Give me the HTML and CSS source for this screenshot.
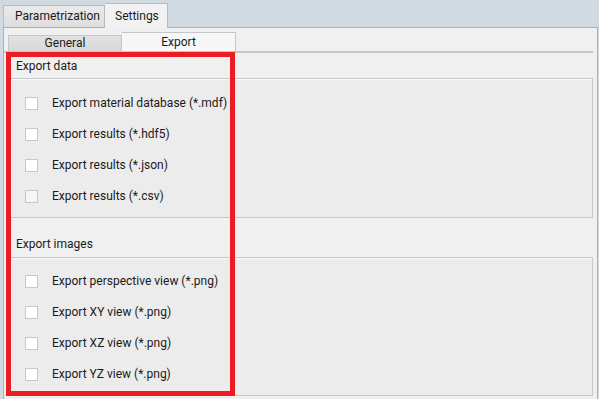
FILE: index.html
```html
<!DOCTYPE html>
<html lang="en">
<head>
    <meta charset="UTF-8">
    <title>Settings - Export</title>
    <link rel="stylesheet" href="styles.css">
</head>
<body>
<div class="window">
    <div class="tabbar">
        <div class="tab">Parametrization</div>
        <div class="tab active">Settings</div>
    </div>
    <div class="panel">
        <div class="subtabs">
            <div class="subtab">General</div>
            <div class="subtab active">Export</div>
        </div>
        <div class="content">
            <div class="section-title">Export data</div>
            <div class="group">
                <label class="row"><span class="box"></span>Export material database (*.mdf)</label>
                <label class="row"><span class="box"></span>Export results (*.hdf5)</label>
                <label class="row"><span class="box"></span>Export results (*.json)</label>
                <label class="row"><span class="box off"></span>Export results (*.csv)</label>
            </div>
            <div class="section-title second">Export images</div>
            <div class="group">
                <label class="row"><span class="box"></span>Export perspective view (*.png)</label>
                <label class="row"><span class="box"></span>Export XY view (*.png)</label>
                <label class="row"><span class="box"></span>Export XZ view (*.png)</label>
                <label class="row"><span class="box"></span>Export YZ view (*.png)</label>
            </div>
        </div>
    </div>
    <!-- annotation frame drawn over the screenshot -->
    <div class="highlight"></div>
</div>
</body>
</html>
```

FILE: styles.css
```css
/* Global styles */
body {
    margin: 0;
    background-color: #d1d9e1;
    font-family: Roboto, 'Open Sans', sans-serif;
    font-size: 12px;
    color: #1a1a1a;
}

.window {
    position: relative;
    width: 599px;
    height: 399px;
    overflow: hidden;
}

/* Top tabs */
.tabbar {
    display: flex;
    align-items: flex-end;
    height: 27px;
    padding-left: 3px;
}

.tab {
    width: 102px;
    height: 22px;
    line-height: 21px;
    padding-left: 11px;
    background: linear-gradient(#eaeaea, #dedede);
    border: 1px solid #b4bcc4;
    border-bottom: none;
    box-sizing: border-box;
}

.tab.active {
    width: 63px;
    height: 25px;
    line-height: 24px;
    padding-left: 10px;
    background: #f2f2f2;
    border-left: none;
    margin-bottom: -1px;
    position: relative;
}

/* Main panel */
.panel {
    margin: 0 1px 0 3px;
    height: 372px;
    background-color: #f0f0f0;
    border: 1px solid #a9b1b9;
    border-bottom: none;
    box-sizing: border-box;
}

.subtabs {
    display: flex;
    align-items: flex-end;
    height: 23px;
    padding-left: 4px;
    margin-right: 4px;
    border-bottom: 2px solid #c6c6c6;
}

.subtab {
    width: 114px;
    height: 16px;
    line-height: 15px;
    text-align: center;
    background: linear-gradient(#e2e2e2, #d8d8d8);
    border: 1px solid #c6c6c6;
    border-bottom: none;
    box-sizing: border-box;
}

.subtab.active {
    height: 19px;
    line-height: 19px;
    background: #f7f7f7;
    border-left: none;
}

/* Content */
.content {
    padding: 0 4px 0 6px;
}

.section-title {
    height: 25px;
    line-height: 26px;
    padding-left: 6px;
}

.section-title.second {
    height: 26px;
    margin-top: 13px;
}

.group {
    background-color: #ececec;
    border: 1px solid #c9c9c9;
    box-shadow: inset 1px 1px 0 #f8f8f8;
    padding: 8px 0 6px 14px;
}

.group:last-child {
    padding-top: 7px;
}

.row {
    display: flex;
    align-items: center;
    height: 31px;
    padding-top: 1px;
    box-sizing: border-box;
}

.box {
    width: 13px;
    height: 13px;
    margin-right: 14px;
    background-color: #ffffff;
    border: 1px solid #c8c8c8;
    box-sizing: border-box;
}

.box.off {
    background-color: #f6f6f6;
}

/* Red annotation frame */
.highlight {
    position: absolute;
    left: 6px;
    top: 52px;
    width: 229px;
    height: 344px;
    border: 5px solid #ed1c24;
    box-sizing: border-box;
}
```
